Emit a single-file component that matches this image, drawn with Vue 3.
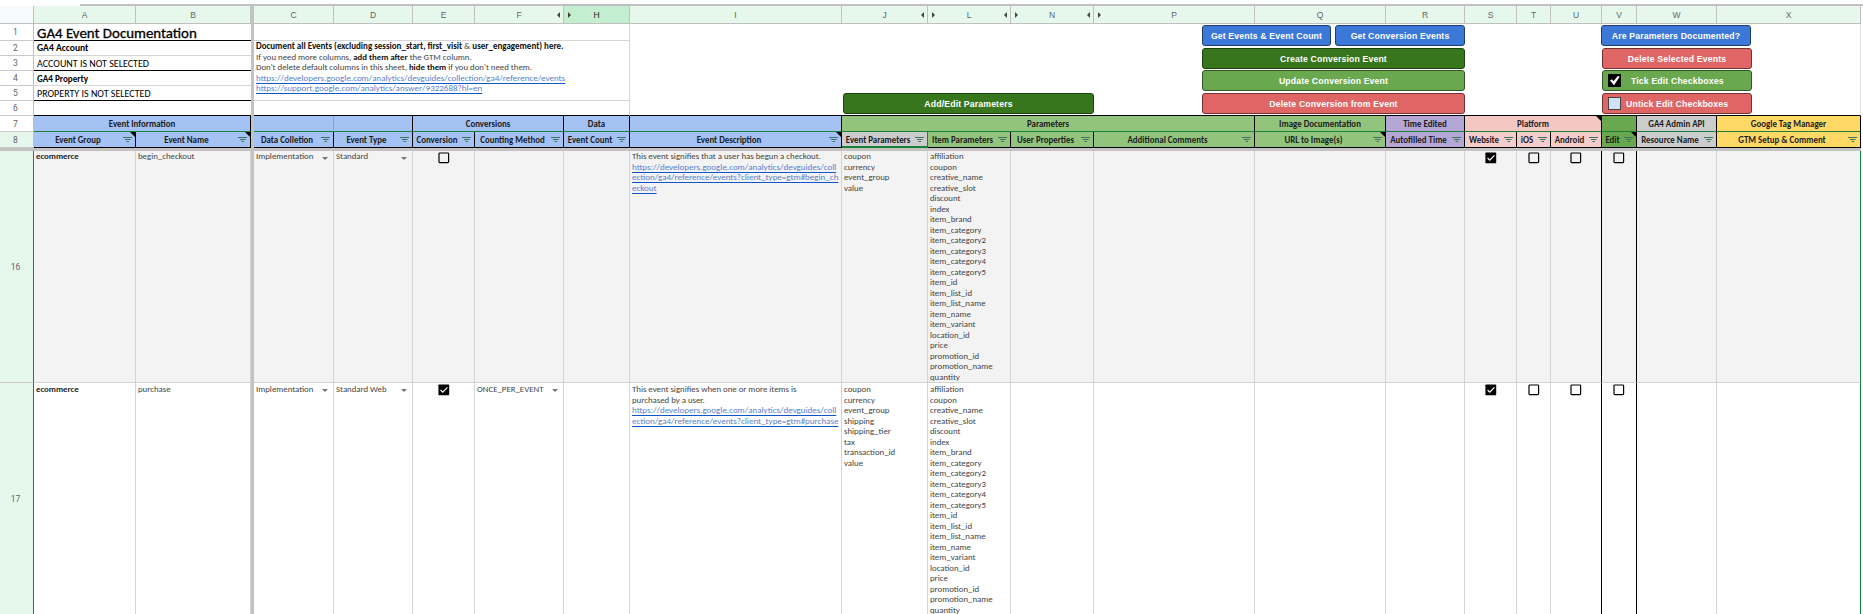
<script setup>
const letters = [
  { n: 'A' }, { n: 'B' }, { n: '', bar: true }, { n: 'C' }, { n: 'D' }, { n: 'E' },
  { n: 'F', l: true }, { n: 'H', r: true, active: true }, { n: 'I' }, { n: 'J', l: true },
  { n: 'L', l: true, r: true }, { n: 'N', l: true, r: true }, { n: 'P', r: true }, { n: 'Q' },
  { n: 'R' }, { n: 'S' }, { n: 'T' }, { n: 'U' }, { n: 'V' }, { n: 'W' }, { n: 'X' },
]
const groups = [
  { t: 'Event Information', span: 2, c: 'blue' },
  { bar: true, span: 1 },
  { t: '', span: 1, c: 'blue soft' },
  { t: '', span: 1, c: 'blue' },
  { t: 'Conversions', span: 2, c: 'blue' },
  { t: 'Data', span: 1, c: 'blue' },
  { t: '', span: 1, c: 'blue' },
  { t: 'Parameters', span: 4, c: 'green' },
  { t: 'Image Documentation', span: 1, c: 'green' },
  { t: 'Time Edited', span: 1, c: 'purple' },
  { t: 'Platform', span: 3, c: 'pink', note: true },
  { t: '', span: 1, c: 'deep' },
  { t: 'GA4 Admin API', span: 1, c: 'gray' },
  { t: 'Google Tag Manager', span: 1, c: 'yellow' },
]
const fields = [
  { t: 'Event Group', c: 'blue', note: true },
  { t: 'Event Name', c: 'blue', note: true },
  { bar: true },
  { t: 'Data Colletion', c: 'blue' },
  { t: 'Event Type', c: 'blue' },
  { t: 'Conversion', c: 'blue' },
  { t: 'Counting Method', c: 'blue' },
  { t: 'Event Count', c: 'blue' },
  { t: 'Event Description', c: 'blue', note: true },
  { t: 'Event Parameters', c: 'gray picked' },
  { t: 'Item Parameters', c: 'green' },
  { t: 'User Properties', c: 'green' },
  { t: 'Additional Comments', c: 'green' },
  { t: 'URL to Image(s)', c: 'green', note: true },
  { t: 'Autofilled Time', c: 'purple' },
  { t: 'Website', c: 'rose' },
  { t: 'iOS', c: 'rose' },
  { t: 'Android', c: 'rose' },
  { t: 'Edit', c: 'deep', note: true },
  { t: 'Resource Name', c: 'gray' },
  { t: 'GTM Setup & Comment', c: 'yellow' },
]
const items = ['affiliation', 'coupon', 'creative_name', 'creative_slot', 'discount', 'index', 'item_brand',
  'item_category', 'item_category2', 'item_category3', 'item_category4', 'item_category5', 'item_id',
  'item_list_id', 'item_list_name', 'item_name', 'item_variant', 'location_id', 'price', 'promotion_id',
  'promotion_name', 'quantity']
const records = [
  {
    n: 16, shade: true,
    cells: [
      { lines: ['ecommerce'], bold: true }, { lines: ['begin_checkout'] }, { bar: true },
      { lines: ['Implementation'], drop: true }, { lines: ['Standard'], drop: true },
      { box: 'off' }, {}, {},
      {
        lines: ['This event signifies that a user has begun a checkout.'],
        links: ['https://developers.google.com/analytics/devguides/coll', 'ection/ga4/reference/events?client_type=gtm#begin_ch', 'eckout'],
      },
      { lines: ['coupon', 'currency', 'event_group', 'value'] },
      { lines: items }, {}, {}, {}, {},
      { box: 'on' }, { box: 'off' }, { box: 'off', dark: true }, { box: 'off', dark: true }, {}, { last: true },
    ],
  },
  {
    n: 17, shade: false,
    cells: [
      { lines: ['ecommerce'], bold: true }, { lines: ['purchase'] }, { bar: true },
      { lines: ['Implementation'], drop: true }, { lines: ['Standard Web'], drop: true },
      { box: 'on' }, { lines: ['ONCE_PER_EVENT'], drop: true }, {},
      {
        lines: ['This event signifies when one or more items is', 'purchased by a user.'],
        links: ['https://developers.google.com/analytics/devguides/coll', 'ection/ga4/reference/events?client_type=gtm#purchase'],
      },
      { lines: ['coupon', 'currency', 'event_group', 'shipping', 'shipping_tier', 'tax', 'transaction_id', 'value'] },
      { lines: items }, {}, {}, {}, {},
      { box: 'on' }, { box: 'off' }, { box: 'off', dark: true }, { box: 'off', dark: true }, {}, { last: true },
    ],
  },
]
</script>

<template>
  <div class="sheet">
    <div class="topline"></div>

    <div class="grid letters">
      <div class="corner"></div>
      <div v-for="(c, i) in letters" :key="i" :class="c.bar ? 'vbar' : ['letter', { active: c.active }]">
        <i v-if="c.r" class="tri right"></i>
        <span>{{ c.n }}</span>
        <i v-if="c.l" class="tri left"></i>
      </div>
    </div>

    <div class="intro">
      <div class="nums">
        <div v-for="n in 6" :key="n" class="num">{{ n }}</div>
      </div>
      <div class="titles">
        <div class="title ink">GA4 Event Documentation</div>
        <div class="sub large">GA4 Account</div>
        <div class="val ink">ACCOUNT IS NOT SELECTED</div>
        <div class="sub">GA4 Property</div>
        <div class="val ink">PROPERTY IS NOT SELECTED</div>
        <div></div>
      </div>
      <div class="vbar"></div>
      <div class="notes">
        <div class="blank"></div>
        <div class="memo">
          <p class="lead"><b>Document all Events (excluding session_start, first_visit</b> &amp; <b>user_engagement) here.</b></p>
          <p>If you need more columns, <b>add them after</b> the GTM column.</p>
          <p>Don't delete default columns in this sheet, <b>hide them</b> if you don't need them.</p>
          <p><a>https://developers.google.com/analytics/devguides/collection/ga4/reference/events</a></p>
          <p><a>https://support.google.com/analytics/answer/9322688?hl=en</a></p>
        </div>
      </div>
      <div class="rest"></div>
    </div>

    <div class="grid row7">
      <div class="num">7</div>
      <div v-for="(g, i) in groups" :key="i" :class="g.bar ? 'vbar' : ['group', g.c, 's' + g.span]">
        {{ g.t }}<i v-if="g.note" class="note"></i>
      </div>
    </div>

    <div class="grid row8">
      <div class="num lit">8</div>
      <div v-for="(f, i) in fields" :key="i" :class="f.bar ? 'vbar' : ['field', f.c]">
        <template v-if="!f.bar">
          <span>{{ f.t }}</span>
          <svg class="filter" width="9" height="7" viewBox="0 0 9 7"><path d="M0 .5h9M2 2.500h5.500M3.500 4.500h2.500" /></svg>
        </template>
        <i v-if="f.note" class="note"></i>
      </div>
    </div>
    <div class="hbar"></div>

    <div v-for="r in records" :key="r.n" class="grid record" :class="{ shade: r.shade }">
      <div class="num lit edge">{{ r.n }}</div>
      <div v-for="(c, i) in r.cells" :key="i" :class="c.bar ? 'vbar' : ['cell', { bold: c.bold, center: c.box, dark: c.dark, last: c.last }]">
        <svg v-if="c.box" class="box" width="12" height="12" viewBox="0 0 12 12">
          <rect v-if="c.box === 'off'" x="1" y="1" width="9.6" height="9.6" rx=".8" fill="none" stroke="#000" stroke-width="1.2" />
          <template v-else>
            <rect x=".4" y=".4" width="10.8" height="10.8" rx=".8" />
            <path d="M2.6 6l2.200 2.200 4.600-4.800" fill="none" stroke="#fff" stroke-width="1.2" />
          </template>
        </svg>
        <p v-for="l in c.lines" :key="l">{{ l }}</p>
        <p v-for="l in c.links" :key="l"><a>{{ l }}</a></p>
        <i v-if="c.drop" class="drop"></i>
      </div>
    </div>

    <div class="btns params"><div class="btn forest">Add/Edit Parameters</div></div>
    <div class="btns events">
      <div class="pair">
        <div class="btn azure">Get Events &amp; Event Count</div>
        <div class="btn azure">Get Conversion Events</div>
      </div>
      <div class="btn forest">Create Conversion Event</div>
      <div class="btn leaf">Update Conversion Event</div>
      <div class="btn red">Delete Conversion from Event</div>
    </div>
    <div class="btns edits">
      <div class="btn azure nudge">Are Parameters Documented?</div>
      <div class="btn red">Delete Selected Events</div>
      <div class="btn leaf iconed">
        <svg width="13" height="13" viewBox="0 0 13 13"><rect width="13" height="13" /><path d="M2 6.500L4 5.300l1.500 2L9.800 2l1.900.7L6 11.200z" fill="#fff" /></svg>
        <span>Tick Edit Checkboxes</span>
      </div>
      <div class="btn red iconed">
        <svg width="13" height="13" viewBox="0 0 13 13"><rect x=".5" y=".5" width="12" height="12" fill="#cfe2f3" stroke="#444" /></svg>
        <span>Untick Edit Checkboxes</span>
      </div>
    </div>
  </div>
</template>

<style>
body { margin: 0; background: #fff; }
</style>

<style scoped>
.sheet {
  position: relative; width: 1863px; height: 614px; overflow: hidden; background: #fff;
  font-family: Calibri, Carlito, Lato, sans-serif; font-size: 8.8px; color: #434343;
}
.sheet * { box-sizing: border-box; }
p { margin: 0; height: 10.5px; line-height: 10.5px; white-space: nowrap; }
.topline { height: 6px; border-bottom: 2px solid #c0c0c0; margin-left: 80px; }
.grid {
  display: grid;
  grid-template-columns: 34px 102px 115px 3px 80px 79px 62px 89px 66px 212px 86px 83px 83px 161px 131px 79px 52px 34px 51px 35px 80px 144px;
}
.vbar { background: #c3c3c3; }
.letters { height: 18px; }
.corner { background: #f8f9fa; border-right: 1px solid #c0c0c0; border-bottom: 1px solid #c0c0c0; }
.letter {
  position: relative; display: flex; align-items: center; justify-content: center;
  background: #e6f8ec; border-right: 1px solid #c0c0c0; border-bottom: 1px solid #c0c0c0;
  font: 8.5px "Liberation Sans", Arial, sans-serif; color: #5f6368;
}
.letter.active { background: #c3efd0; color: #202124; }
.tri { position: absolute; top: 6px; border: 3px solid transparent; }
.tri.left { right: 3px; border-left-width: 0; border-right-color: #444; }
.tri.right { left: 4px; border-right-width: 0; border-left-color: #444; }
.num {
  display: flex; align-items: center; justify-content: center; padding-right: 2px;
  font: 8.5px Roboto, "Liberation Sans", sans-serif; color: #5f6368;
  border-right: 1px solid #c0c0c0; border-bottom: 1px solid #c9c9c9;
}
.num.lit { background: #e6f8ec; }
.num.edge { border-right-color: #188038; }
.intro { display: grid; grid-template-columns: 34px 217px 3px 376px 1231px; height: 92px; }
.nums, .titles { display: grid; grid-template-rows: 17px repeat(5, 15px); }
.titles { color: #000; white-space: nowrap; }
.titles div { padding-left: 3px; border-bottom: 1px solid #d5d5d5; display: flex; align-items: center; }
.titles .ink, .titles div:last-child { border-bottom-color: #000; }
.titles .title { font-size: 14.9px; -webkit-text-stroke: .3px #000; padding-top: 2px; line-height: 14px; }
.titles .sub { font-size: 9.1px; font-weight: bold; }
.titles .sub.large { font-size: 9.6px; }
.titles .val { font-size: 10px; padding-top: 2px; line-height: 12px; }
.notes { border-right: 1px solid #d5d5d5; border-bottom: 1px solid #000; }
.blank { height: 17px; border-bottom: 1px solid #d5d5d5; }
.memo { height: 60px; padding: 0 0 0 2px; border-bottom: 1px solid #d5d5d5; }
.lead { font-size: 9px; }
b { color: #111; }
a { font-size: 9px; color: #5a7fcf; text-decoration: underline; text-decoration-color: #1155cc; text-underline-offset: 1.5px; text-decoration-thickness: 1px; text-decoration-skip-ink: none; }
.rest { border-right: 1px solid #e0e0e0; border-bottom: 1px solid #000; }
.row7, .row8 { height: 16px; }
.group, .field {
  position: relative; display: flex; align-items: center; justify-content: center;
  font-weight: bold; font-size: 8.9px; color: #1c1c1c; white-space: nowrap;
  border-right: 1px solid #000; border-bottom: 1px solid #188038;
}
.group { padding-top: 1px; }
.s2 { grid-column: span 2; }
.s3 { grid-column: span 3; }
.s4 { grid-column: span 4; }
.field { border-bottom-color: #000; padding: 1px 15px 0 2px; }
.field span { flex: 1; display: flex; justify-content: center; }
.filter { position: absolute; right: 3px; top: 5px; fill: none; stroke: #3f7360; stroke-width: 1; }
.blue { background: #a4c2f4; }
.soft { border-right-color: #85a3d8; }
.green { background: #93c47d; }
.purple { background: #b4a7d6; }
.pink { background: #f4c7c3; }
.rose { background: #f4cccc; }
.deep { background: #6aa84f; }
.gray { background: #ccc; }
.yellow { background: #ffd966; }
.picked { border-right-color: #188038; border-bottom: 2px solid #188038; padding-top: 2px; }
.note { position: absolute; top: 0; right: 0; border-top: 5px solid #000; border-left: 5px solid transparent; }
.hbar { height: 3px; background: #c3c3c3; width: 1861px; }
.record { height: 232px; }
.cell { position: relative; padding: 0 0 0 2px; border-right: 1px solid #d3d3d3; border-bottom: 1px solid #d3d3d3; }
.record:not(.shade) .cell { padding-top: 1px; }
.shade .cell { background: #f3f3f3; }
.cell.bold { font-weight: bold; color: #222; }
.cell.dark { border-right-color: #000; }
.cell.last { border-right-color: #188038; }
.cell.center { text-align: center; padding: 1px 0 0; }
.box { display: block; margin: 0 auto; }
.drop { position: absolute; right: 5px; top: 6px; border: 3px solid transparent; border-top-color: #757575; border-bottom-width: 0; }
.btns { position: absolute; display: grid; top: 25px; grid-template-rows: 23px 22px 23px 21px; }
.params { left: 843px; width: 251px; top: 93px; grid-template-rows: 21px; }
.events { left: 1202px; width: 263px; }
.edits { left: 1601px; width: 151px; }
.pair { display: grid; grid-template-columns: 129px 130px; column-gap: 4px; }
.btn {
  display: flex; align-items: center; justify-content: center; height: 21px; border-radius: 3px; border: 1px solid #2b3b2b;
  color: #fff; font: bold 8.7px "Liberation Sans", Arial, sans-serif; letter-spacing: .15px; white-space: nowrap;
}
.edits .btn { margin-left: 1px; }
.azure { background: #3c78d8; border-color: #1f3d6e; }
.forest { background: #38761d; border-color: #1f4210; }
.leaf { background: #6aa84f; border-color: #355527; }
.red { background: #e06666; border-color: #713333; }
.edits .nudge { margin: 0 1px 0 0; }
.iconed { justify-content: flex-start; padding-left: 5px; gap: 10px; }
.iconed + .iconed { gap: 5px; }
</style>
